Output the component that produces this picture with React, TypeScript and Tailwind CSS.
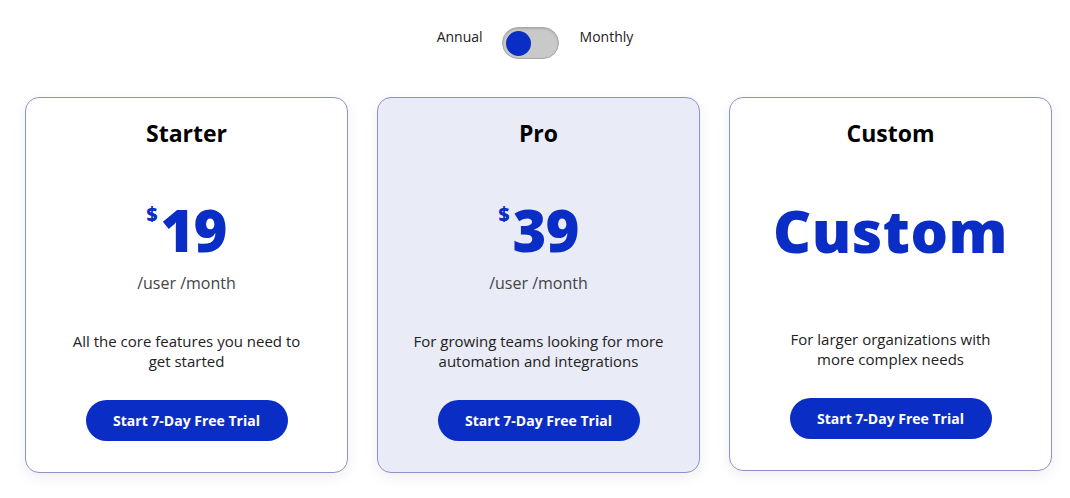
import { useState } from 'react';

const font = { fontFamily: '"Open Sans", "Liberation Sans", sans-serif' };

interface Plan {
    name: string;
    price?: string;
    description: [string, string];
    highlight?: boolean;
}

const plans: Plan[] = [
    { name: 'Starter', price: '19', description: ['All the core features you need to', 'get started'] },
    { name: 'Pro', price: '39', description: ['For growing teams looking for more', 'automation and integrations'], highlight: true },
    { name: 'Custom', description: ['For larger organizations with', 'more complex needs'] },
];

function PlanCard({ plan }: { plan: Plan }) {
    return (
        <div
            className={`flex flex-col items-center rounded-[14px] border border-[#8d92c9] pt-[21px] pb-[31px] shadow-[0_4px_14px_rgba(0,0,0,0.07)] ${plan.highlight ? 'bg-[#e9ebf6]' : 'bg-white'}`}
        >
            <h3 className="h-[28px] text-[23px] leading-[28px] font-bold text-black">{plan.name}</h3>

            {plan.price ? (
                <>
                    {/* Price */}
                    <div className="mt-[55px] flex h-[56px] items-start text-[#0a2ec5]">
                        <span className="mt-[3px] mr-[3px] text-[19px] leading-none font-extrabold">$</span>
                        <span className="text-[58px] leading-[56px] font-extrabold tracking-[-1px]">{plan.price}</span>
                    </div>
                    <p className="mt-[13px] text-[16px] leading-[24px] text-[#444]">/user /month</p>
                    <p className="mt-[36px] text-center text-[15px] leading-[20px] text-[#222]">
                        {plan.description[0]}
                        <br />
                        {plan.description[1]}
                    </p>
                </>
            ) : (
                <>
                    <div className="mt-[55px] h-[56px] text-[59px] leading-[56px] font-extrabold tracking-[0.5px] text-[#0a2ec5]">
                        Custom
                    </div>
                    <p className="mt-[71px] text-center text-[15px] leading-[20px] text-[#222]">
                        {plan.description[0]}
                        <br />
                        {plan.description[1]}
                    </p>
                </>
            )}

            <button className="mt-[29px] h-[41px] w-[202px] rounded-full bg-[#0a2ec5] text-[14px] font-bold text-white">
                Start 7-Day Free Trial
            </button>
        </div>
    );
}

export default function App() {
    const [monthly, setMonthly] = useState(false);

    return (
        <div className="min-h-screen bg-white" style={font}>
            {/* Billing toggle */}
            <div className="flex items-start justify-center pt-[27px]">
                <span className="text-[14px] leading-[20px] text-[#222]">Annual</span>
                <button
                    onClick={() => setMonthly(m => !m)}
                    className="relative mx-[19px] h-[32px] w-[57px] rounded-full border border-[#a8a8a8] bg-[#c9c9c9] shadow-[inset_0_1px_2px_rgba(0,0,0,0.15)]"
                    aria-label="Toggle billing period"
                >
                    <span
                        className={`absolute top-[2.5px] h-[25px] w-[25px] rounded-full bg-[#0a2ec5] ${monthly ? 'left-[27px]' : 'left-[3px]'}`}
                    />
                </button>
                <span className="ml-[2px] text-[14px] leading-[20px] text-[#222]">Monthly</span>
            </div>

            {/* Plans */}
            <div className="mt-[38px] pl-[25px]">
                <div className="grid w-[1027px] grid-cols-3 items-start gap-[29px]">
                    {plans.map(plan => (
                        <PlanCard key={plan.name} plan={plan} />
                    ))}
                </div>
            </div>
        </div>
    );
}
